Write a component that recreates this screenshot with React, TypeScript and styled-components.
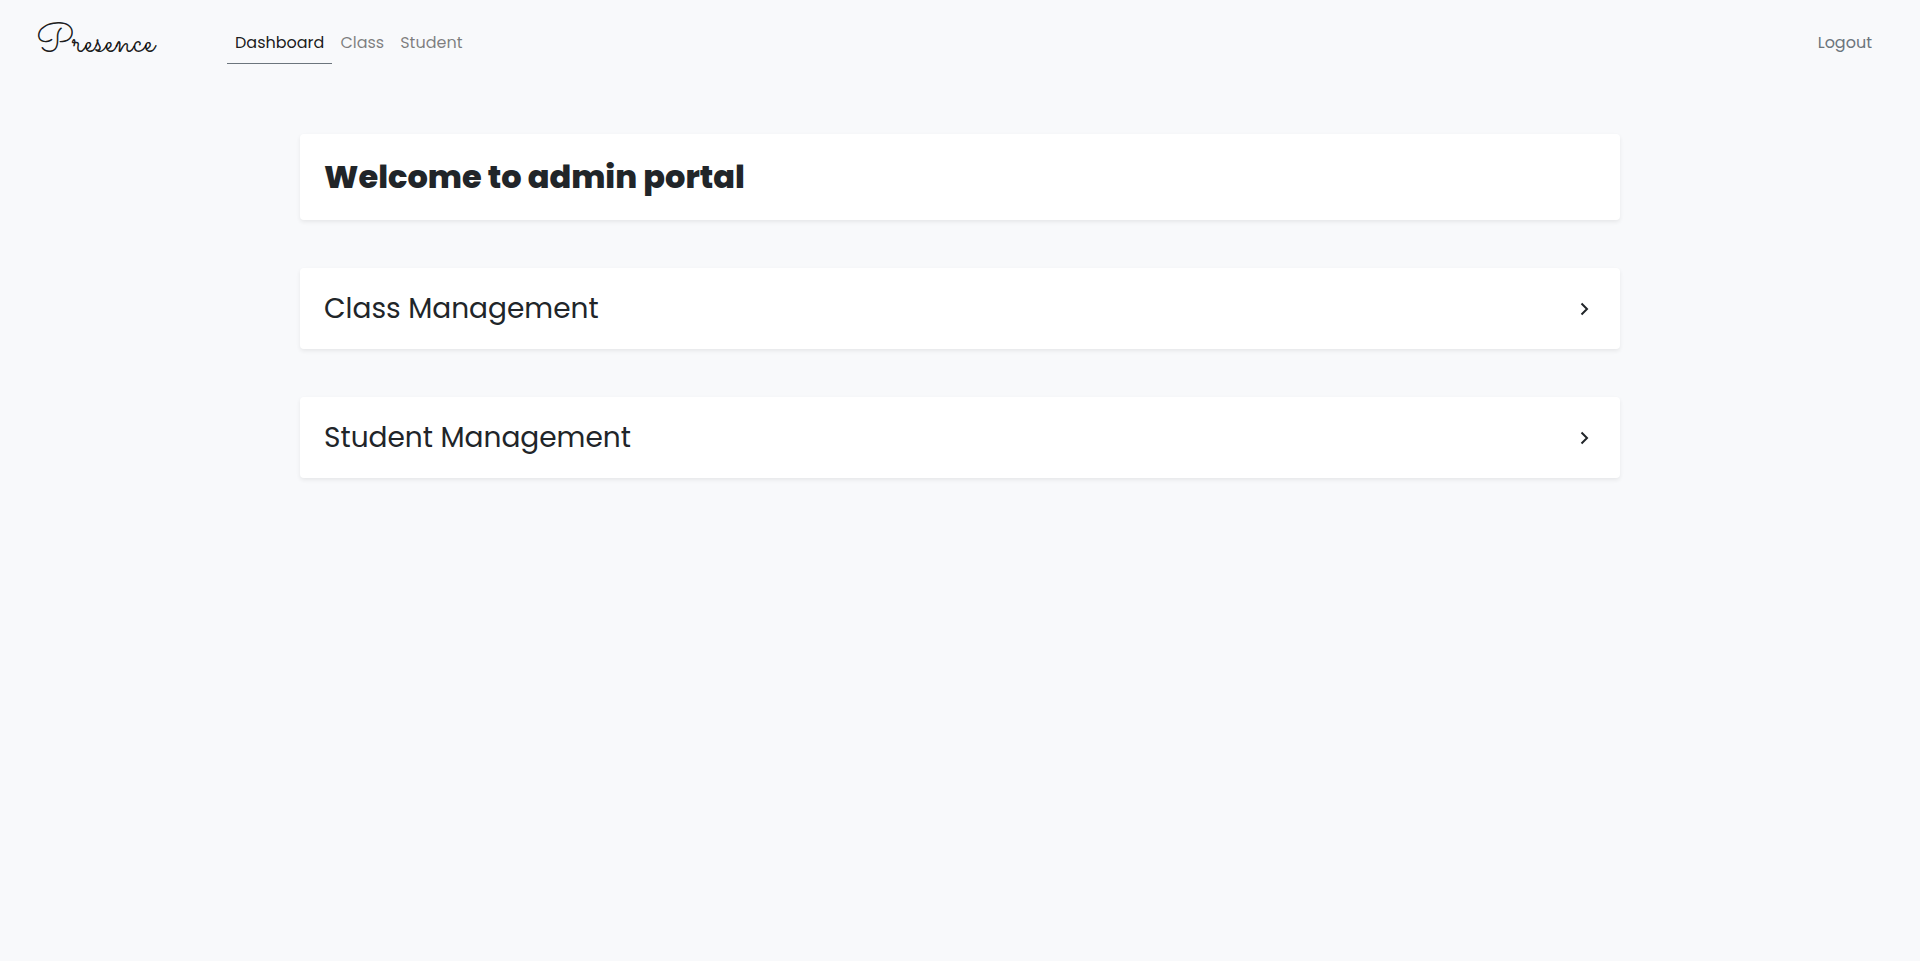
import React from "react";
import styled, { createGlobalStyle } from "styled-components";

const GlobalStyle = createGlobalStyle`
  *, *::before, *::after { box-sizing: border-box; }
  body {
    margin: 0;
    background: #f8f9fb;
    color: #212529;
    font-family: Poppins, Inter, "Liberation Sans", sans-serif;
    font-size: 16px;
    font-weight: 400;
    line-height: 24px;
  }
`;

const Navbar = styled.nav`
  display: flex;
  align-items: center;
  padding: 8px 40px 8px 36px;
  min-height: 86px;
`;

const Brand = styled.a`
  width: 191px;
  color: rgba(0, 0, 0, 0.9);
  font-family: "Sacramento", "Liberation Serif", serif;
  font-size: 40px;
  line-height: 48px;
  text-decoration: none;
`;

const NavList = styled.ul`
  display: flex;
  flex: 1;
  margin: 0;
  padding: 0;
  list-style: none;
`;

const NavLink = styled.a<{ $active?: boolean }>`
  display: block;
  padding: 8px;
  border-bottom: 1px solid ${(p) => (p.$active ? "#6c757d" : "transparent")};
  color: ${(p) => (p.$active ? "rgba(0, 0, 0, 0.9)" : "rgba(0, 0, 0, 0.5)")};
  text-decoration: none;
`;

const LogoutButton = styled.button`
  padding: 8px;
  border: 0;
  background: none;
  color: #6c757d;
  font: inherit;
  cursor: pointer;
`;

const Container = styled.main`
  display: flex;
  flex-direction: column;
  gap: 48px;
  max-width: 1320px;
  margin: 48px auto;
`;

const Card = styled.section`
  padding: 24px;
  border-radius: 4px;
  background: #fff;
  box-shadow: 0 2px 4px rgba(0, 0, 0, 0.075);
`;

const Title = styled.h1`
  margin: 0;
  font-size: 32px;
  font-weight: 800;
  line-height: 38px;
`;

const CardLink = styled.a`
  display: flex;
  align-items: center;
  justify-content: space-between;
  color: inherit;
  text-decoration: none;
`;

const CardTitle = styled.h2`
  margin: 0;
  font-size: 28px;
  font-weight: 400;
  line-height: 33px;
`;

const Chevron = styled.svg`
  width: 24px;
  height: 24px;
`;

const links = ["Dashboard", "Class", "Student"];
const sections = ["Class Management", "Student Management"];

export default function App() {
  return (
    <>
      <GlobalStyle />
      <Navbar>
        <Brand href="#">Presence</Brand>
        <NavList>
          {links.map((label, i) => (
            <li key={label}>
              <NavLink href="#" $active={i === 0}>{label}</NavLink>
            </li>
          ))}
        </NavList>
        <LogoutButton type="button">Logout</LogoutButton>
      </Navbar>
      <Container>
        <Card>
          <Title>Welcome to admin portal</Title>
        </Card>
        {sections.map((label) => (
          <Card key={label}>
            <CardLink href="#">
              <CardTitle>{label}</CardTitle>
              <Chevron viewBox="0 0 24 24" fill="none" stroke="#212529" strokeWidth="2" aria-hidden="true">
                <path d="M9.5 6.5 15 12 9.5 17.5" />
              </Chevron>
            </CardLink>
          </Card>
        ))}
      </Container>
    </>
  );
}
